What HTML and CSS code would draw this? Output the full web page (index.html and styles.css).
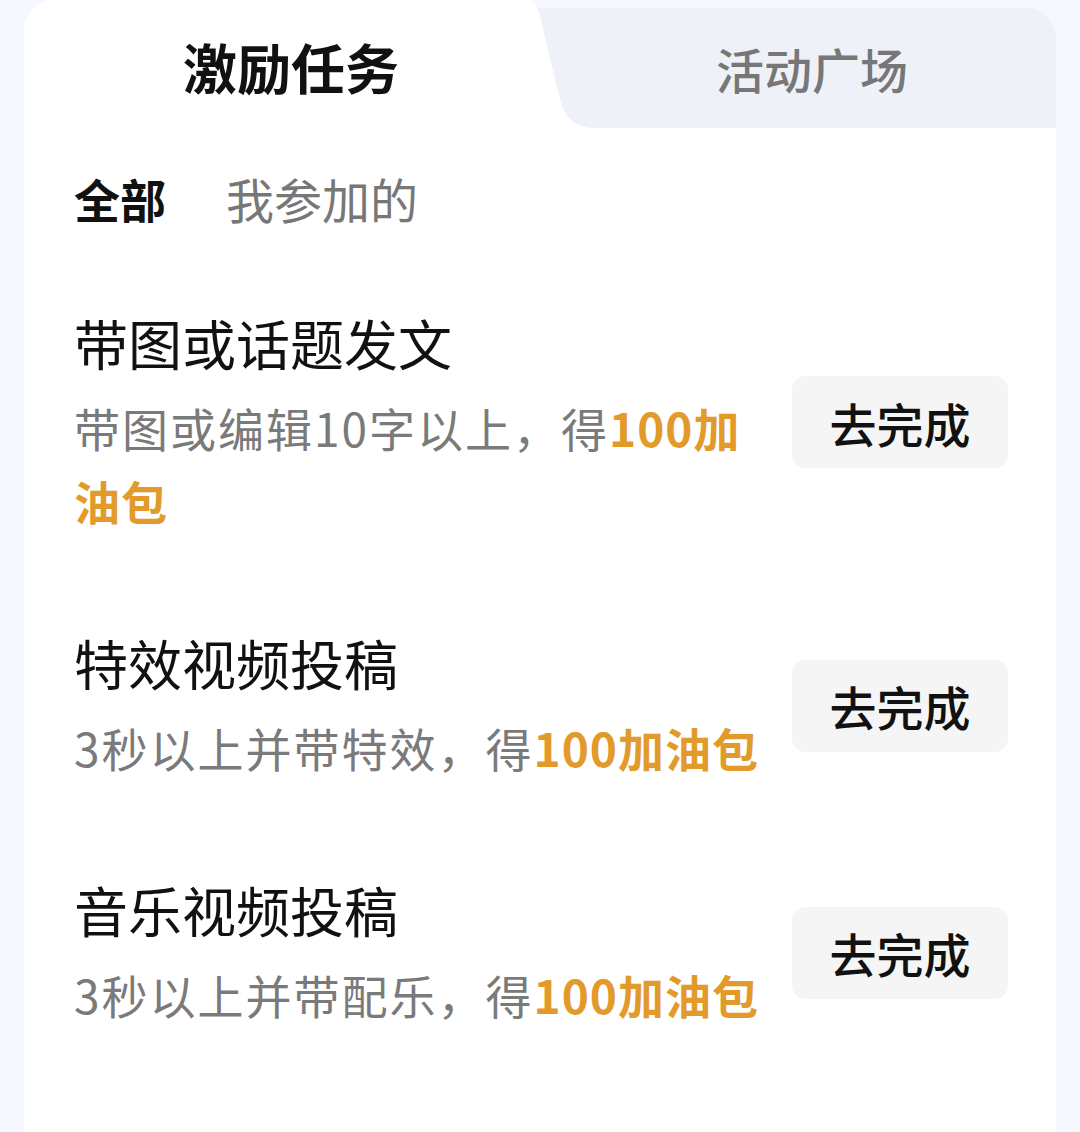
FILE: index.html
```html
<!DOCTYPE html>
<html lang="zh-CN">
<head>
<meta charset="utf-8">
<link rel="stylesheet" href="styles.css">
</head>
<body>
<div class="page">
  <div class="card">
    <div class="tabs">
      <svg class="tabs-bg" width="1032" height="128" viewBox="0 0 1032 128">
        <path d="M490 8 H1002 A30 30 0 0 1 1032 38 V128 H490 Z" fill="#eef2f8"/>
        <path d="M0 30 A30 30 0 0 1 30 0 H500 C510 0 514 6 516 16 L535 96 C541 120 552 128 572 128 H0 Z" fill="#ffffff"/>
      </svg>
      <div class="tab tab-active">激励任务</div>
      <div class="tab tab-other">活动广场</div>
    </div>
    <div class="body">
      <div class="subtabs">
        <span class="sub sub-active">全部</span>
        <span class="sub">我参加的</span>
      </div>
      <div class="list">
        <div class="item">
          <div class="info">
            <div class="title">带图或话题发文</div>
            <div class="desc">带图或编辑10字以上，得<b class="reward">100加油包</b></div>
          </div>
          <button class="btn">去完成</button>
        </div>
        <div class="item">
          <div class="info">
            <div class="title">特效视频投稿</div>
            <div class="desc">3秒以上并带特效，得<b class="reward">100加油包</b></div>
          </div>
          <button class="btn">去完成</button>
        </div>
        <div class="item">
          <div class="info">
            <div class="title">音乐视频投稿</div>
            <div class="desc">3秒以上并带配乐，得<b class="reward">100加油包</b></div>
          </div>
          <button class="btn">去完成</button>
        </div>
      </div>
    </div>
  </div>
</div>
</body>
</html>
```

FILE: styles.css
```css
* { box-sizing: border-box; }
html, body { margin: 0; padding: 0; }
body {
  background: #f5f8fe;
  font-family: "Noto Sans CJK SC", "Noto Sans", sans-serif;
  width: 1080px;
  height: 1132px;
  overflow: hidden;
}
.page {
  padding: 0 24px;
  height: 1132px;
}
.card {
  width: 1032px;
  height: 1132px;
  display: flex;
  flex-direction: column;
}
.tabs {
  display: grid;
  grid-template-columns: 516px 516px;
  grid-template-rows: 128px;
}
.tabs-bg {
  grid-column: 1 / 3;
  grid-row: 1;
  display: block;
}
.tab {
  grid-row: 1;
  display: flex;
  align-items: center;
  justify-content: flex-start;
  z-index: 1;
}
.tab-active {
  grid-column: 1;
  font-size: 54px;
  font-weight: 700;
  color: #111;
  padding-top: 4px;
  padding-left: 159px;
}
.tab-other {
  grid-column: 2;
  font-size: 48px;
  font-weight: 500;
  color: #777;
  padding-top: 8px;
  padding-left: 176px;
}
.body {
  flex: 1;
  background: #ffffff;
  padding: 40px 48px 0 50px;
}
.subtabs {
  display: flex;
  gap: 60px;
  height: 60px;
  align-items: center;
}
.sub {
  font-size: 48px;
  color: #777;
  line-height: 60px;
}
.sub-active {
  font-size: 46px;
  color: #111;
  font-weight: 600;
}
.list {
  display: flex;
  flex-direction: column;
  gap: 90px;
  margin-top: 79px;
}
.item {
  display: flex;
  align-items: center;
  justify-content: space-between;
}
.info {
  width: 690px;
}
.title {
  font-size: 54px;
  line-height: 72px;
  color: #111;
}
.desc {
  margin-top: 12px;
  font-size: 46px;
  letter-spacing: 2px;
  line-height: 73px;
  color: #7a7a7a;
}
.reward {
  color: #e29a2b;
  font-weight: 700;
  letter-spacing: 1px;
}
.btn {
  width: 216px;
  height: 92px;
  border: none;
  border-radius: 14px;
  background: #f5f5f5;
  font-family: "Noto Sans CJK SC", "Noto Sans", sans-serif;
  font-size: 47px;
  font-weight: 500;
  color: #111;
  padding: 0;
}
```
